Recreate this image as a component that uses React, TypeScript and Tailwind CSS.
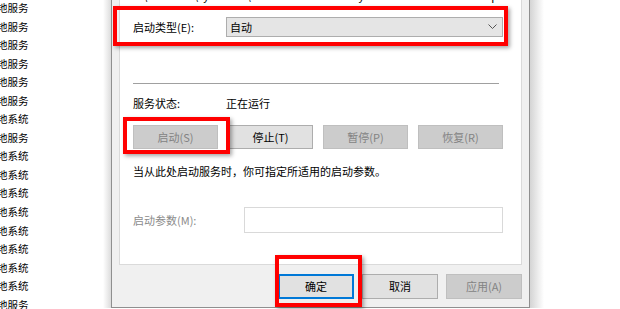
const services = [
  '地服务', '地服务', '地服务', '地服务', '地服务', '地服务', '地系统', '地服务', '地系统',
  '地系统', '地系统', '地系统', '地系统', '地系统', '地系统', '地系统', '地服务',
];

function Btn({ label, disabled, primary, className = '' }: { label: string; disabled?: boolean; primary?: boolean; className?: string }) {
  const tone = disabled
    ? 'bg-[#cccccc] border-[#bfbfbf] text-[#838383]'
    : primary
      ? 'bg-[#e1e1e1] border-[#0078d7] text-black shadow-[inset_0_0_0_1px_#0078d7]'
      : 'bg-[#e1e1e1] border-[#adadad] text-black';
  return (
    <div className={`flex items-center justify-center border text-[11px] ${tone} ${className}`}>{label}</div>
  );
}

function RedBox({ className }: { className: string }) {
  return <div className={`absolute border-4 border-[#ff0000] shadow-[2px_2px_4px_rgba(0,0,0,0.35)] ${className}`} />;
}

export default function App() {
  return (
    <div className="relative flex w-[620px] h-[309px] overflow-hidden bg-white text-black font-['Noto_Sans_CJK_SC',sans-serif]">
      {/* services list behind the dialog */}
      <div className="w-[103px] flex flex-col -mt-[1px] text-[10.5px] leading-[18.55px]">
        {services.map((s, i) => (
          <div key={i} className="-ml-[3px] whitespace-nowrap">{s}</div>
        ))}
      </div>
      <div className="w-[8px] h-[308px] bg-linear-to-r from-white to-[#dcdcdc]" />

      {/* properties dialog */}
      <div className="w-[419px] h-[308px] bg-[#f0f0f0] border-x border-b border-[#8f8f8f] flex flex-col px-[7px]">
        <div className="h-[265px] bg-white border-x border-b border-[#dadada] flex flex-col pl-[13px] pr-[18px] text-[11px]">
          <div className="h-[3px] overflow-hidden flex items-end">
            <span className="leading-[15px] whitespace-nowrap">C:\Windows\system32\svchost.exe -k LocalSystemNetworkRestricted -p</span>
          </div>

          <div className="mt-[14px] h-[20px] flex items-center">
            <span className="w-[93px]">启动类型(E):</span>
            <div className="flex-1 h-full bg-[#e5e5e5] border border-[#adadad] flex items-center justify-between pl-[3px] pr-[5px]">
              <span>自动</span>
              <svg width="9" height="6" viewBox="0 0 9 6" fill="none">
                <path d="M0.5 0.5 L4.5 4.5 L8.5 0.5" stroke="#555" strokeWidth="1" />
              </svg>
            </div>
          </div>

          <div className="mt-[46px] h-px bg-[#a0a0a0] mr-[4px]" />

          <div className="mt-[11px] h-[16px] flex items-center">
            <span className="w-[93px]">服务状态:</span>
            <span>正在运行</span>
          </div>

          <div className="mt-[14px] h-[24px] grid grid-cols-4 gap-[10px]">
            <Btn label="启动(S)" disabled />
            <Btn label="停止(T)" />
            <Btn label="暂停(P)" disabled />
            <Btn label="恢复(R)" disabled />
          </div>

          <div className="mt-[14px] h-[16px] flex items-center">当从此处启动服务时，你可指定所适用的启动参数。</div>

          <div className="mt-[28px] h-[26px] flex items-center">
            <span className="w-[111px] text-[#8b8b8b]">启动参数(M):</span>
            <div className="flex-1 h-full bg-white border border-[#d9d9d9]" />
          </div>
        </div>

        <div className="mt-[9px] flex justify-end gap-[8px]">
          <Btn label="确定" primary className="w-[76px] h-[25px]" />
          <Btn label="取消" className="w-[76px] h-[25px]" />
          <Btn label="应用(A)" disabled className="w-[76px] h-[25px]" />
        </div>
      </div>
      <div className="w-[14px] h-[308px] bg-linear-to-r from-[#d4d4d4] to-white" />

      {/* annotation boxes */}
      <RedBox className="left-[113px] top-[6px] w-[395px] h-[40px]" />
      <RedBox className="left-[123px] top-[117px] w-[107px] h-[37px]" />
      <RedBox className="left-[275px] top-[255px] w-[87px] h-[52px]" />
    </div>
  );
}
